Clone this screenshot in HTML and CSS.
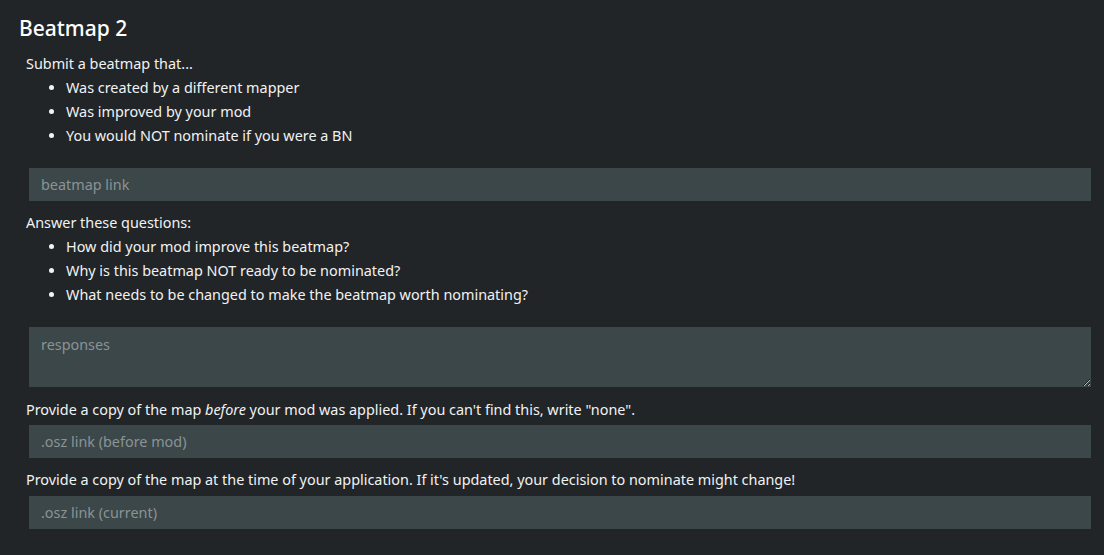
FILE: index.html
```html
<!DOCTYPE html>
<html>
<head>
<meta charset="utf-8">
<link rel="stylesheet" href="styles.css">
</head>
<body>
<div class="page">
  <h2 class="title">Beatmap 2</h2>
  <div class="section">
    <p class="lead">Submit a beatmap that...</p>
    <ul class="list">
      <li>Was created by a different mapper</li>
      <li>Was improved by your mod</li>
      <li>You would NOT nominate if you were a BN</li>
    </ul>
    <input class="field first" type="text" placeholder="beatmap link">
    <p class="lead q">Answer these questions:</p>
    <ul class="list">
      <li>How did your mod improve this beatmap?</li>
      <li>Why is this beatmap NOT ready to be nominated?</li>
      <li>What needs to be changed to make the beatmap worth nominating?</li>
    </ul>
    <textarea class="field area" placeholder="responses"></textarea>
    <p class="lead p1">Provide a copy of the map <em>before</em> your mod was applied. If you can't find this, write "none".</p>
    <input class="field tight" type="text" placeholder=".osz link (before mod)">
    <p class="lead p2">Provide a copy of the map at the time of your application. If it's updated, your decision to nominate might change!</p>
    <input class="field tight2" type="text" placeholder=".osz link (current)">
  </div>
</div>
</body>
</html>
```
FILE: styles.css
```css
html, body {
  margin: 0;
  padding: 0;
  background: #212528;
  height: 100%;
}
body {
  font-family: "Noto Sans", "Open Sans", sans-serif;
  color: #f2f2f2;
  font-size: 14.4px;
}
.page {
  padding: 12px 13px 0 19px;
}
.title {
  margin: 0;
  font-size: 21px;
  font-weight: 500;
  line-height: 32px;
  color: #ffffff;
}
.section {
  padding-left: 7px;
  margin-top: 8px;
}
.lead {
  margin: 0;
  line-height: 24px;
}
.list {
  margin: 0;
  padding-left: 40px;
  line-height: 24px;
}
.field {
  display: block;
  box-sizing: border-box;
  width: calc(100% - 3px);
  margin-left: 3px;
  background: #3c4749;
  border: none;
  outline: none;
  color: #f2f2f2;
  font-family: inherit;
  font-size: 14.4px;
  padding: 0 12px;
  height: 33px;
  border-radius: 0;
}
.field::placeholder {
  color: #8a9395;
}
.first {
  margin-top: 20px;
}
.q {
  margin-top: 10px;
}
.area {
  margin-top: 20px;
  height: 60px;
  padding: 8px 12px;
  resize: vertical;
}
.p1 {
  margin-top: 11px;
}
.tight {
  margin-top: 3px;
}
.p2 {
  margin-top: 10px;
}
.tight2 {
  margin-top: 4px;
}
```
